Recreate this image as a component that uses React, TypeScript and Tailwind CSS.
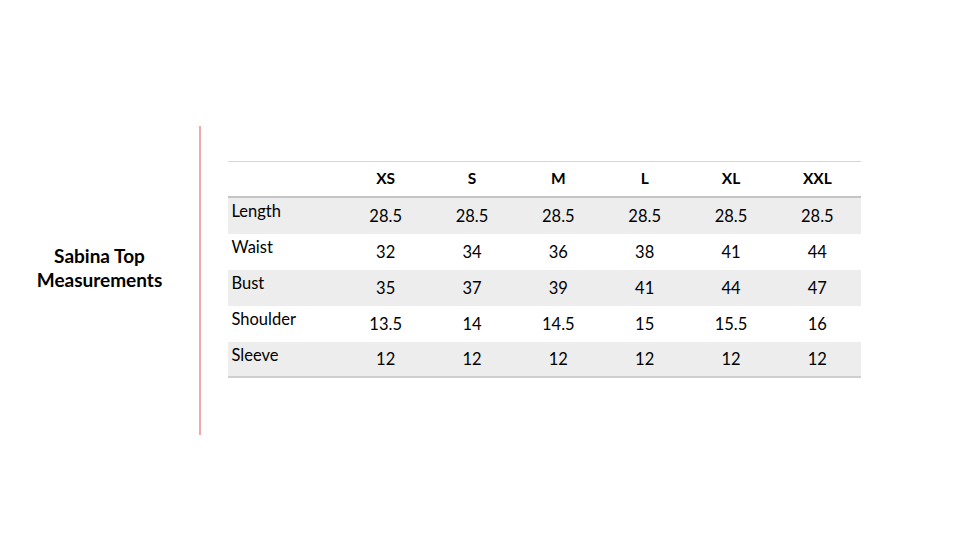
import React from "react";

const sizes = ["XS", "S", "M", "L", "XL", "XXL"];
const rows: [string, string[]][] = [
  ["Length", ["28.5", "28.5", "28.5", "28.5", "28.5", "28.5"]],
  ["Waist", ["32", "34", "36", "38", "41", "44"]],
  ["Bust", ["35", "37", "39", "41", "44", "47"]],
  ["Shoulder", ["13.5", "14", "14.5", "15", "15.5", "16"]],
  ["Sleeve", ["12", "12", "12", "12", "12", "12"]],
];

export default function App() {
  return (
    <div
      className="w-[960px] h-[540px] bg-white flex items-start text-black overflow-hidden"
      style={{ fontFamily: "Lato, 'Open Sans', sans-serif" }}
    >
      <div className="w-[199px] mt-[244px] text-center font-bold text-[19px] leading-[24px]">
        <div>Sabina Top</div>
        <div>Measurements</div>
      </div>
      <div className="w-[1.5px] h-[309px] mt-[126px] bg-[#f0a8a8]" />
      <div className="ml-[27px] mt-[161px] w-[633px]">
        <div className="grid grid-cols-[115px_repeat(6,1fr)] h-[37px] border-t border-[#d6d6d6] border-b-2 border-b-[#c4c4c4] items-center text-[15.5px] font-bold">
          <div />
          {sizes.map((s) => (
            <div key={s} className="text-center">
              {s}
            </div>
          ))}
        </div>
        {rows.map(([label, vals], i) => (
          <div
            key={label}
            className={`grid grid-cols-[115px_repeat(6,1fr)] h-[36px] text-[16.5px] ${
              i % 2 === 0 ? "bg-[#ededed]" : "bg-white"
            } ${i === rows.length - 1 ? "border-b-2 border-[#cfcfcf]" : ""}`}
          >
            <div className="pl-[4px] pt-[1px]">{label}</div>
            {vals.map((v, j) => (
              <div key={j} className="flex items-center justify-center">
                {v}
              </div>
            ))}
          </div>
        ))}
      </div>
    </div>
  );
}
